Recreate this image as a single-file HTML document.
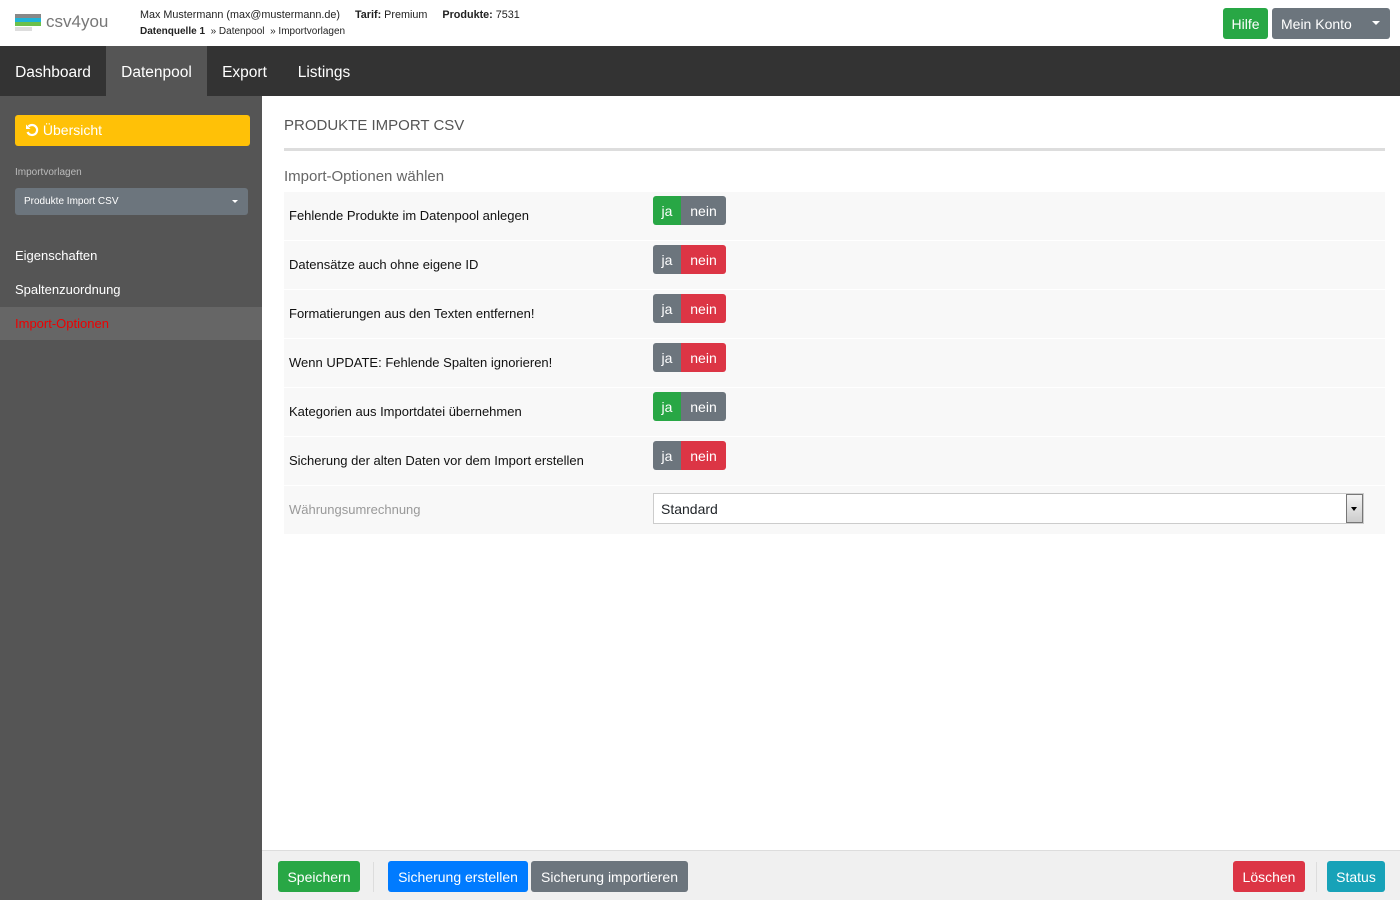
<!DOCTYPE html>
<html><head><meta charset="utf-8"><style>
*{box-sizing:border-box;margin:0;padding:0}
body{width:1400px;height:900px;overflow:hidden;font-family:"Liberation Sans",Arial,sans-serif;background:#fff;position:relative;color:#212529}
.abs{position:absolute}
.btn{position:absolute;color:#fff;font-size:14px;border-radius:3px;display:flex;align-items:center;justify-content:center}
.nav a{position:absolute;top:46px;height:50px;line-height:54px;color:#fff;font-size:15.5px;text-align:center}
.row{position:absolute;left:284px;width:1101px;height:48px;background:#f8f8f8}
.row .l{position:absolute;left:5px;top:16px;font-size:13px;color:#111}
.tg{position:absolute;left:369px;top:4px;width:73px;height:29px;border-radius:3px;overflow:hidden;display:flex;font-size:14px;color:#fff}
.tg span{display:flex;align-items:center;justify-content:center;background:#6c757d}
.tg .j{width:28px}.tg .n{width:45px}
.g{background:#28a745!important}.r{background:#dc3545!important}
.side a{position:absolute;left:15px;color:#fff;font-size:13px}
</style></head><body>
<!-- header -->
<div class="abs" style="left:15px;top:14px;width:26px;height:4px;background:#888"></div>
<div class="abs" style="left:15px;top:18px;width:26px;height:4px;background:#1fb4d8"></div>
<div class="abs" style="left:15px;top:22px;width:26px;height:4px;background:#6cc04a"></div>
<div class="abs" style="left:15px;top:27px;width:17px;height:4px;background:#ddd"></div>
<div class="abs" style="left:46px;top:12px;font-size:17px;color:#777">csv4you</div>
<div class="abs" style="left:140px;top:9px;font-size:10.8px;color:#222;white-space:nowrap">Max Mustermann (max@mustermann.de) &nbsp;&nbsp;&nbsp;&nbsp;<b>Tarif:</b> Premium &nbsp;&nbsp;&nbsp;&nbsp;<b>Produkte:</b> 7531</div>
<div class="abs" style="left:140px;top:26px;font-size:10px;color:#222;white-space:nowrap"><b>Datenquelle 1</b> &nbsp;» Datenpool &nbsp;» Importvorlagen</div>
<div class="btn" style="left:1223px;top:8px;width:45px;height:31px;background:#28a745">Hilfe</div>
<div class="btn" style="left:1272px;top:8px;width:118px;height:31px;background:#6c757d;justify-content:flex-start;padding-left:9px">Mein Konto<span style="position:absolute;right:10px;top:13px;border:4px solid transparent;border-top:4px solid #fff;border-bottom:0"></span></div>
<!-- nav -->
<div class="abs" style="left:0;top:46px;width:1400px;height:50px;background:#333"></div>
<div class="nav">
<a style="left:0;width:106px">Dashboard</a>
<a style="left:106px;width:101px;background:#555">Datenpool</a>
<a style="left:207px;width:75px">Export</a>
<a style="left:282px;width:84px">Listings</a>
</div>
<!-- sidebar -->
<div class="abs side" style="left:0;top:96px;width:262px;height:804px;background:#555">
<div class="abs" style="left:15px;top:19px;width:235px;height:31px;background:#ffc107;border-radius:3px;color:#fff;font-size:14px;line-height:31px;padding-left:10px">
<svg width="14" height="14" viewBox="0 0 14 14" style="vertical-align:-2px"><path d="M3.5 3.5A5 5 0 1 1 2.5 9" fill="none" stroke="#fff" stroke-width="2.2"/><path d="M1 1.5V6H5.5Z" fill="#fff"/></svg> Übersicht</div>
<div class="abs" style="left:15px;top:71px;font-size:10px;color:#bbb">Importvorlagen</div>
<div class="abs" style="left:15px;top:92px;width:233px;height:27px;background:#6c757d;border-radius:3px;color:#fff;font-size:10px;line-height:27px;padding-left:9px">Produkte Import CSV<span style="position:absolute;right:10px;top:12px;border:3px solid transparent;border-top:3px solid #fff;border-bottom:0"></span></div>
<a style="top:152px">Eigenschaften</a>
<a style="top:186px">Spaltenzuordnung</a>
<div class="abs" style="left:0;top:211px;width:262px;height:33px;background:#666"></div>
<a style="top:220px;color:#e00">Import-Optionen</a>
</div>
<!-- content -->
<div class="abs" style="left:284px;top:117px;font-size:15px;color:#555">PRODUKTE IMPORT CSV</div>
<div class="abs" style="left:284px;top:148px;width:1101px;height:3px;background:#ddd"></div>
<div class="abs" style="left:284px;top:168px;font-size:15px;color:#666">Import-Optionen wählen</div>

<div class="row" style="top:192px"><div class="l">Fehlende Produkte im Datenpool anlegen</div><div class="tg"><span class="j g">ja</span><span class="n">nein</span></div></div>
<div class="row" style="top:241px"><div class="l">Datensätze auch ohne eigene ID</div><div class="tg"><span class="j">ja</span><span class="n r">nein</span></div></div>
<div class="row" style="top:290px"><div class="l">Formatierungen aus den Texten entfernen!</div><div class="tg"><span class="j">ja</span><span class="n r">nein</span></div></div>
<div class="row" style="top:339px"><div class="l">Wenn UPDATE: Fehlende Spalten ignorieren!</div><div class="tg"><span class="j">ja</span><span class="n r">nein</span></div></div>
<div class="row" style="top:388px"><div class="l">Kategorien aus Importdatei übernehmen</div><div class="tg"><span class="j g">ja</span><span class="n">nein</span></div></div>
<div class="row" style="top:437px"><div class="l">Sicherung der alten Daten vor dem Import erstellen</div><div class="tg"><span class="j">ja</span><span class="n r">nein</span></div></div>
<div class="row" style="top:486px"><div class="l" style="color:#999">Währungsumrechnung</div>
<div class="abs" style="left:369px;top:7px;width:711px;height:31px;background:#fff;border:1px solid #ccc;font-size:14px;line-height:30px;padding-left:7px">Standard
<div class="abs" style="right:0;top:0;width:17px;height:29px;border:1px solid #777;background:linear-gradient(#f4f4f4,#ccc)"><span style="position:absolute;left:4px;top:12px;border:3.5px solid transparent;border-top:4px solid #000;border-bottom:0"></span></div></div></div>

<!-- footer -->
<div class="abs" style="left:262px;top:850px;width:1138px;height:50px;background:#f0f0f0;border-top:1px solid #ddd"></div>
<div class="btn" style="left:278px;top:861px;width:82px;height:31px;background:#28a745">Speichern</div>
<div class="abs" style="left:373px;top:862px;width:1px;height:30px;background:#ddd"></div>
<div class="btn" style="left:388px;top:861px;width:140px;height:31px;background:#007bff">Sicherung erstellen</div>
<div class="btn" style="left:531px;top:861px;width:157px;height:31px;background:#6c757d">Sicherung importieren</div>
<div class="btn" style="left:1233px;top:861px;width:72px;height:31px;background:#dc3545">Löschen</div>
<div class="abs" style="left:1316px;top:862px;width:1px;height:30px;background:#ddd"></div>
<div class="btn" style="left:1327px;top:861px;width:58px;height:31px;background:#17a2b8">Status</div>
</body></html>
